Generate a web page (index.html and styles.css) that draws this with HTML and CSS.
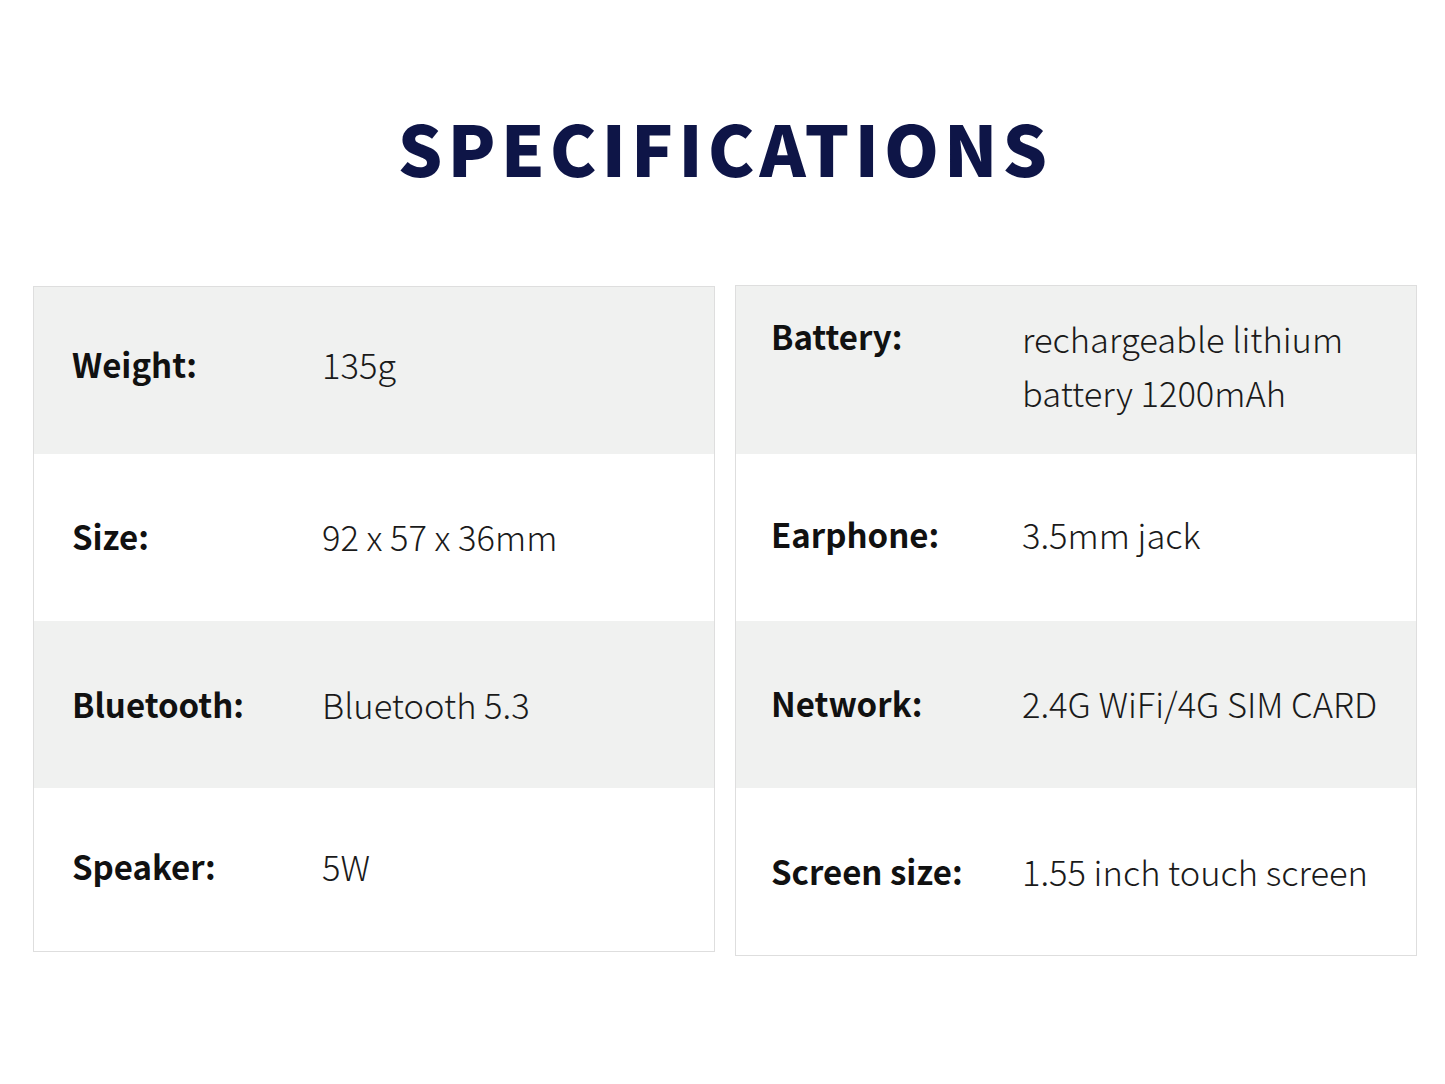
FILE: index.html
```html
<!DOCTYPE html>
<html>
<head>
<meta charset="utf-8">
<link rel="stylesheet" href="styles.css">
</head>
<body>
<div class="page">
  <h1 class="title">SPECIFICATIONS</h1>
  <div class="tables">
    <div class="table table-left">
      <div class="row gray lift-lg"><div class="label">Weight:</div><div class="value">135g</div></div>
      <div class="row lift-sm"><div class="label">Size:</div><div class="value">92 x 57 x 36mm</div></div>
      <div class="row gray"><div class="label">Bluetooth:</div><div class="value">Bluetooth 5.3</div></div>
      <div class="row last lift-md"><div class="label">Speaker:</div><div class="value">5W</div></div>
    </div>
    <div class="table table-right">
      <div class="row gray tall"><div class="label top">Battery:</div><div class="value wrap">rechargeable lithium battery 1200mAh</div></div>
      <div class="row lift-md"><div class="label">Earphone:</div><div class="value">3.5mm jack</div></div>
      <div class="row gray lift-sm"><div class="label">Network:</div><div class="value">2.4G WiFi/4G SIM CARD</div></div>
      <div class="row tall-last"><div class="label">Screen size:</div><div class="value">1.55 inch touch screen</div></div>
    </div>
  </div>
</div>
</body>
</html>
```
FILE: styles.css
```css
html, body {
  margin: 0;
  padding: 0;
  background: #ffffff;
}
body {
  font-family: "Noto Sans CJK SC", "Noto Sans", sans-serif;
  color: #111111;
}
.page {
  width: 1445px;
  height: 1084px;
  box-sizing: border-box;
  padding-top: 92px;
}
.title {
  margin: 0;
  text-align: center;
  font-size: 70px;
  font-weight: 900;
  letter-spacing: 5px;
  padding-left: 5px;
  color: #0e1547;
  line-height: 110px;
}
.tables {
  display: flex;
  align-items: flex-start;
  gap: 20px;
  padding-left: 33px;
  margin-top: 83px;
}
.table {
  width: 682px;
  box-sizing: border-box;
  border: 1px solid #dedede;
}
.table-left {
  margin-top: 1px;
}
.row {
  display: flex;
  align-items: center;
  height: 167px;
  box-sizing: border-box;
  padding-left: 38px;
  padding-bottom: 2px;
  background: #ffffff;
}
.table-right .row {
  padding-left: 35px;
}
.row.gray {
  background: #f0f1f0;
}
.row.last {
  height: 163px;
}
.row.tall {
  height: 168px;
  padding-bottom: 10px;
}
.row.tall-last {
  height: 167px;
}
.row.lift-sm {
  padding-bottom: 4px;
}
.row.lift-md {
  padding-bottom: 8px;
}
.row.lift-lg {
  padding-bottom: 14px;
}
.label {
  width: 250px;
  flex: none;
  font-weight: 700;
  font-size: 33px;
  line-height: 54px;
  color: #111111;
}
.label.top {
  align-self: flex-start;
  margin-top: 23px;
}
.value {
  font-weight: 300;
  font-size: 34.5px;
  line-height: 54px;
  color: #1a1a1a;
}
.value.wrap {
  max-width: 340px;
}
.table-right .label {
  width: 251px;
}
```
